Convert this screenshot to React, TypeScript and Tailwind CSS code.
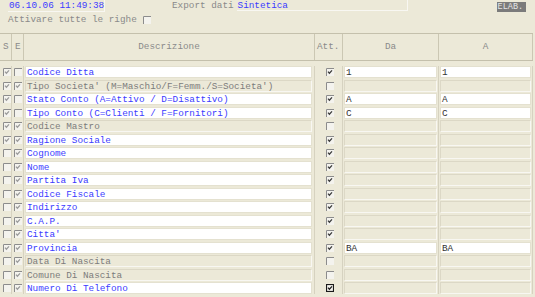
import React from "react"

type Row = {
  label: string
  s: boolean
  e: boolean
  on: boolean
  da?: string
  a?: string
  range?: boolean
}

const rows: Row[] = [
  { label: "Codice Ditta", s: true, e: false, on: true, da: "1", a: "1", range: true },
  { label: "Tipo Societa' (M=Maschio/F=Femm./S=Societa')", s: true, e: true, on: false },
  { label: "Stato Conto (A=Attivo / D=Disattivo)", s: true, e: false, on: true, da: "A", a: "A", range: true },
  { label: "Tipo Conto (C=Clienti / F=Fornitori)", s: true, e: false, on: true, da: "C", a: "C", range: true },
  { label: "Codice Mastro", s: true, e: true, on: false },
  { label: "Ragione Sociale", s: true, e: true, on: true },
  { label: "Cognome", s: false, e: true, on: true },
  { label: "Nome", s: false, e: true, on: true },
  { label: "Partita Iva", s: false, e: true, on: true },
  { label: "Codice Fiscale", s: false, e: true, on: true },
  { label: "Indirizzo", s: false, e: true, on: true },
  { label: "C.A.P.", s: false, e: true, on: true },
  { label: "Citta'", s: false, e: true, on: true },
  { label: "Provincia", s: true, e: true, on: true, da: "BA", a: "BA", range: true },
  { label: "Data Di Nascita", s: false, e: true, on: false },
  { label: "Comune Di Nascita", s: false, e: true, on: false },
  { label: "Numero Di Telefono", s: false, e: true, on: true },
]

const Box = ({ checked, dark, focus }: { checked: boolean; dark?: boolean; focus?: boolean }) => {
  const mark = dark ? "#3a3a3a" : "#9a9a9a"
  return (
    <svg width="8" height="8" viewBox="0 0 8 8" className="block">
      <rect x="0" y="0" width="8" height="8" fill="#ffffff" />
      <rect x="1" y="1" width="7" height="7" fill="#f4f3ee" />
      {focus ? (
        <rect x="0.5" y="0.5" width="7" height="7" fill="#f4f3ee" stroke="#1a1a1a" strokeWidth="1.2" />
      ) : (
        <path d="M0.5 8 V0.5 H8" fill="none" stroke="#8c8c8c" strokeWidth="1" />
      )}
      {checked && (
        <path d="M2 3.6 L3.4 5.2 L6 2.4" fill="none" stroke={focus ? "#1a1a1a" : mark} strokeWidth="1.3" />
      )}
    </svg>
  )
}

const Field = ({ on, text, blue }: { on: boolean; text?: string; blue?: boolean }) => (
  <div
    className={
      "h-[12px] w-full overflow-hidden whitespace-nowrap pl-[1px] leading-[11px] border " +
      (on
        ? "bg-white border-[#e4e1d0] "
        : "bg-[#ece9d8] border-t-[#dcd8c6] border-l-[#dcd8c6] border-b-[#f8f7f2] border-r-[#f8f7f2] ") +
      (blue ? (on ? "text-[#3b3bff]" : "text-[#7c7c7c]") : "text-[#333333]")
    }
  >
    {text}
  </div>
)

export default function App() {
  return (
    <div className="w-[535px] h-[297px] overflow-hidden bg-[#ece9d8] font-['Liberation_Mono',monospace] text-[9.33px] text-[#8a8a8a]">
      <div className="flex h-[13px] items-start whitespace-nowrap">
        <div className="ml-[8px] h-[12px] w-[97px] shrink-0 pl-[1px] leading-[12px] text-[#3b3bff] bg-[#ece9d8] border-r border-b border-[#f8f7f2]">
          06.10.06 11:49:38
        </div>
        <div className="ml-[67px] leading-[11px] shrink-0">Export dati</div>
        <div className="ml-[3px] h-[11px] w-[171px] shrink-0 pl-[1px] leading-[11px] text-[#3b3bff] border-r border-b border-[#f8f7f2]">
          Sintetica
        </div>
        <div className="ml-[89px] mt-[2px] h-[10px] w-[29px] shrink-0 bg-[#7b7b7b] text-[#e4e4e4] text-[8.5px] leading-[10px] pl-[1px]">
          ELAB.
        </div>
      </div>
      <div className="flex h-[20px] items-start pl-[8px] pt-[1px] whitespace-nowrap">
        <span className="leading-[11px]">Attivare tutte le righe</span>
        <span className="ml-[6px] mt-[2px]">
          <Box checked={false} />
        </span>
      </div>
      <div className="border-t border-[#c4c0ac] h-[1px] bg-[#f8f7f2] w-[533px]" />
      <div className="grid grid-cols-[12px_12px_291px_28px_96px_94px] h-[27px] border-b border-[#c4c0ac] w-[533px]">
        <div className="border-r border-[#cbc7b3] pl-[3px] pt-[6px]">S</div>
        <div className="border-r border-[#cbc7b3] pl-[3px] pt-[6px]">E</div>
        <div className="border-r border-[#cbc7b3] text-center pt-[6px]">Descrizione</div>
        <div className="border-r border-[#cbc7b3] pl-[2px] pt-[6px]">Att.</div>
        <div className="border-r border-[#cbc7b3] text-center pt-[6px]">Da</div>
        <div className="border-r border-[#cbc7b3] text-center pt-[6px]">A</div>
      </div>
      <div className="grid grid-cols-[12px_12px_291px_28px_96px_94px] w-[533px] pt-[5px]">
        <div className="border-r border-[#d6d2c0] flex flex-col gap-[1.5px] items-center pl-[2px]">
          {rows.map((r, i) => (
            <div key={i} className="h-[12px] flex items-center">
              <Box checked={r.s} />
            </div>
          ))}
        </div>
        <div className="border-r border-[#d6d2c0] flex flex-col gap-[1.5px] items-center pl-[1px]">
          {rows.map((r, i) => (
            <div key={i} className="h-[12px] flex items-center">
              <Box checked={r.e} />
            </div>
          ))}
        </div>
        <div className="border-r border-[#d6d2c0] flex flex-col gap-[1.5px] pl-[1px] pr-[2px]">
          {rows.map((r, i) => (
            <Field key={i} on={r.on} text={r.label} blue />
          ))}
        </div>
        <div className="border-r border-[#d6d2c0] flex flex-col gap-[1.5px] items-center pl-[2px]">
          {rows.map((r, i) => (
            <div key={i} className="h-[12px] flex items-center">
              <Box checked={r.on} dark focus={i === rows.length - 1} />
            </div>
          ))}
        </div>
        <div className="border-r border-[#d6d2c0] flex flex-col gap-[1.5px] px-[1px]">
          {rows.map((r, i) => (
            <Field key={i} on={!!r.range} text={r.da} />
          ))}
        </div>
        <div className="border-r border-[#d6d2c0] flex flex-col gap-[1.5px] px-[1px]">
          {rows.map((r, i) => (
            <Field key={i} on={!!r.range} text={r.a} />
          ))}
        </div>
      </div>
    </div>
  )
}
